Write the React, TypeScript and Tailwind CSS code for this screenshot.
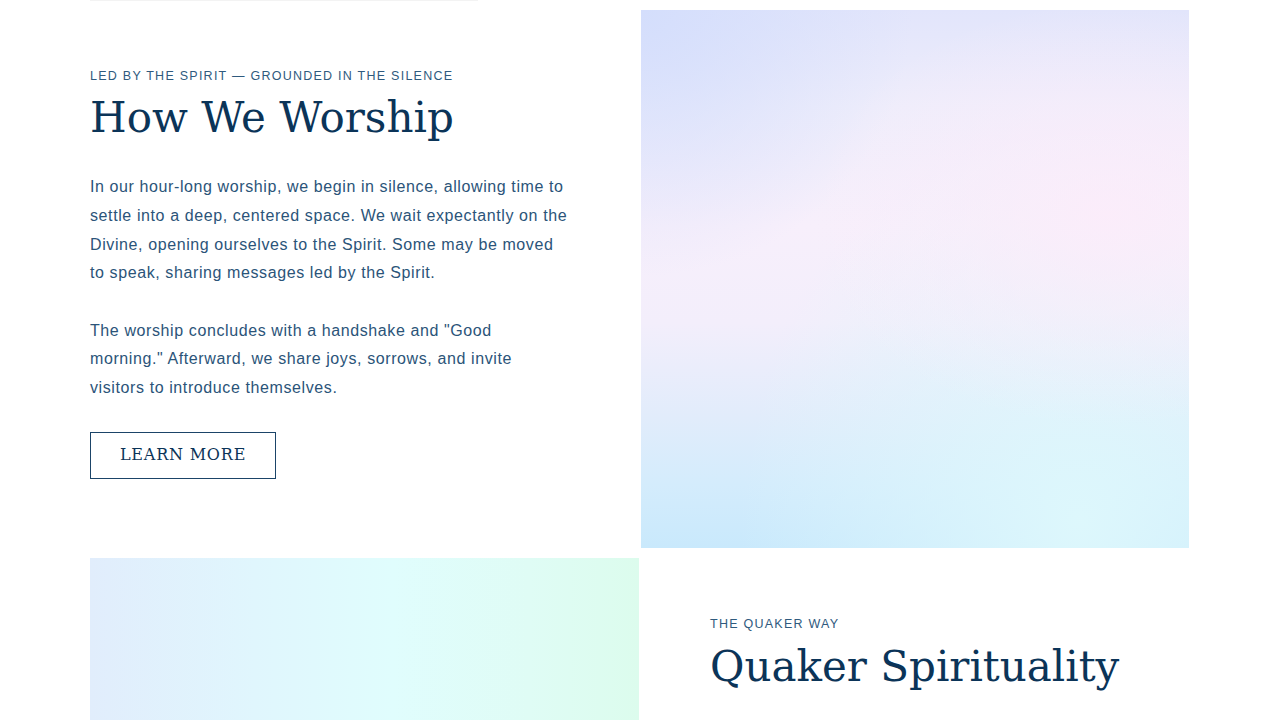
const sans = "font-['Liberation_Sans',Arial,sans-serif]";
const serif = "font-['DejaVu_Serif','Liberation_Serif',serif]";

function Eyebrow({ children }: { children: React.ReactNode }) {
  return (
    <p className={`${sans} text-[12.5px] uppercase tracking-[0.1em] text-[#2f5a7e]`}>
      {children}
    </p>
  );
}

export default function App() {
  return (
    <div className="min-h-screen overflow-hidden bg-white">
      <div className="mx-auto w-[1100px]">
        <div className="h-px w-[388px] bg-[#f3f3f3]" />
        <section className="mt-[9px] grid grid-cols-2">
          <div className="flex flex-col pt-[57px]">
            <Eyebrow>Led by the Spirit — Grounded in the Silence</Eyebrow>
            <h2 className={`${serif} mt-[7px] text-[42px] leading-[1.2] text-[#0b3458]`}>
              How We Worship
            </h2>
            <div
              className={`${sans} mt-[30px] w-[480px] text-[16px] leading-[28.7px] tracking-[0.6px] text-[#2b5479]`}
            >
              <p>
                In our hour-long worship, we begin in silence, allowing time to
                settle into a deep, centered space. We wait expectantly on the
                Divine, opening ourselves to the Spirit. Some may be moved to
                speak, sharing messages led by the Spirit.
              </p>
              <p className="mt-[28.7px]">
                The worship concludes with a handshake and "Good morning."
                Afterward, we share joys, sorrows, and invite visitors to
                introduce themselves.
              </p>
            </div>
            <div className="mt-[29px]">
              <a
                href="#"
                className={`${serif} inline-flex h-[47px] w-[186px] items-center justify-center border border-[#1b4468] text-[16px] tracking-[0.05em] text-[#0b3458]`}
              >
                LEARN MORE
              </a>
            </div>
          </div>
          <div className="pl-px pr-px">
            <div className="h-[538px] bg-[radial-gradient(ellipse_at_85%_38%,rgba(252,236,250,0.9)_0%,rgba(252,236,250,0)_45%),radial-gradient(ellipse_at_80%_95%,rgba(222,248,252,0.95)_0%,rgba(222,248,252,0)_55%),radial-gradient(ellipse_at_0%_0%,rgba(212,222,252,1)_0%,rgba(212,222,252,0)_35%),linear-gradient(to_bottom,#e2e5fb_0%,#eeedfb_18%,#f7effb_40%,#f3eefb_58%,#e2ecfb_75%,#d4ecfc_88%,#c9e9fc_100%)]" />
          </div>
        </section>
        <section className="mt-[10px] grid grid-cols-2">
          <div className="pr-px">
            <div className="h-[300px] bg-[linear-gradient(to_right,#e1edfc_0%,#e0f6fd_30%,#e0fdfd_55%,#dffcf5_80%,#dcfced_100%)]" />
          </div>
          <div className="pl-[70px] pt-[57px]">
            <Eyebrow>The Quaker Way</Eyebrow>
            <h2 className={`${serif} mt-[8px] text-[42px] leading-[1.2] text-[#0b3458]`}>
              Quaker Spirituality
            </h2>
          </div>
        </section>
      </div>
    </div>
  );
}
